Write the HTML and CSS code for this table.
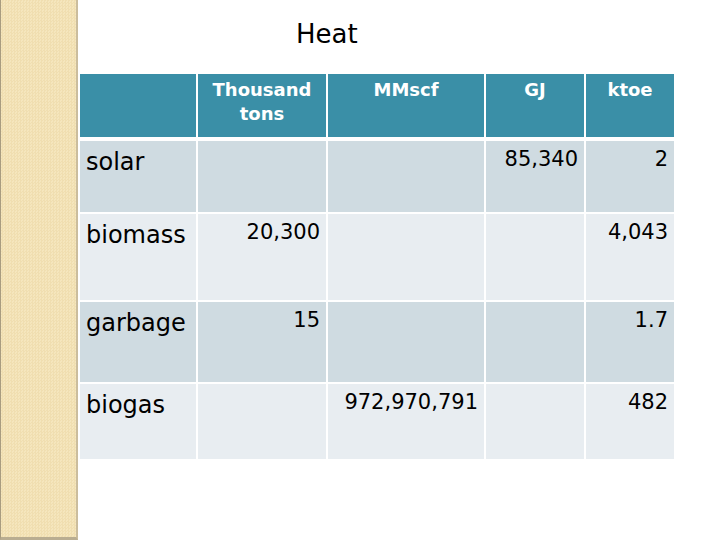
FILE: index.html
```html
<!DOCTYPE html>
<html>
<head>
<meta charset="utf-8">
<link rel="stylesheet" href="styles.css">
</head>
<body>
<div class="slide">
  <div class="stripe"></div>
  <div class="content">
    <h1 class="title">Heat</h1>
    <div class="table">
      <div class="cell head"></div>
      <div class="cell head">Thousand<br>tons</div>
      <div class="cell head">MMscf</div>
      <div class="cell head">GJ</div>
      <div class="cell head">ktoe</div>

      <div class="cell odd label">solar</div>
      <div class="cell odd num"></div>
      <div class="cell odd num"></div>
      <div class="cell odd num">85,340</div>
      <div class="cell odd num">2</div>

      <div class="cell even label">biomass</div>
      <div class="cell even num">20,300</div>
      <div class="cell even num"></div>
      <div class="cell even num"></div>
      <div class="cell even num">4,043</div>

      <div class="cell odd label">garbage</div>
      <div class="cell odd num">15</div>
      <div class="cell odd num"></div>
      <div class="cell odd num"></div>
      <div class="cell odd num">1.7</div>

      <div class="cell even label">biogas</div>
      <div class="cell even num"></div>
      <div class="cell even num">972,970,791</div>
      <div class="cell even num"></div>
      <div class="cell even num">482</div>
    </div>
  </div>
</div>
</body>
</html>
```

FILE: styles.css
```css
html, body {
  margin: 0;
  padding: 0;
  background: #ffffff;
}

body {
  font-family: "DejaVu Sans", Verdana, sans-serif;
  color: #000;
}

.slide {
  display: flex;
  width: 720px;
  height: 540px;
  overflow: hidden;
}

.stripe {
  width: 75px;
  height: 537px;
  flex: none;
  border-left: 1px solid #a89c80;
  border-right: 2px solid #cbbd9d;
  border-bottom: 3px solid #b9ad91;
  background-color: #f3e3b8;
  background-image: repeating-conic-gradient(#f0deb0 0 25%, #f5e6bd 0 50%);
  background-size: 3px 3px;
}

.content {
  flex: 1;
  padding-left: 2px;
}

.title {
  margin: 0;
  height: 74px;
  box-sizing: border-box;
  padding: 19px 0 0 216px;
  font-size: 26px;
  line-height: 30px;
  font-weight: normal;
}

.table {
  display: grid;
  grid-template-columns: 116px 128px 156px 98px 88px;
  grid-template-rows: 65px 71px 86px 80px 75px;
  gap: 2px;
}

.cell {
  box-sizing: border-box;
}

.head {
  background: #3a8fa7;
  color: #ffffff;
  font-weight: bold;
  font-size: 18px;
  line-height: 24px;
  text-align: center;
  padding-top: 4px;
  margin-bottom: 2px;
}

.odd {
  background: #cfdbe1;
}

.even {
  background: #e8edf1;
}

.label {
  font-size: 24px;
  line-height: 28px;
  padding: 7px 0 0 6px;
}

.num {
  font-size: 21px;
  line-height: 25px;
  text-align: right;
  padding: 6px 6px 0 0;
}
```
